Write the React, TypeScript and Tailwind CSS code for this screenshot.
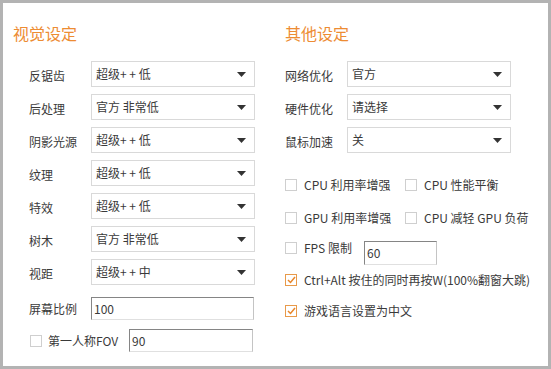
import React from 'react';

const font = { fontFamily: '"Noto Sans CJK SC", "Noto Sans", sans-serif' };

const Select: React.FC<{ value: string }> = ({ value }) => (
  <div className="w-[164px] h-[26px] border border-[#d9d9d9] bg-white flex items-center justify-between pl-[4px] pr-[8px] text-[12px] text-[#3a3a3a]">
    <span className="leading-none">{value}</span>
    <svg width="9" height="5" viewBox="0 0 9 5">
      <path d="M0 0h9L4.5 5z" fill="#333" />
    </svg>
  </div>
);

const Input: React.FC<{ value: string; w: string }> = ({ value, w }) => (
  <div
    className={`${w} h-[23px] border border-t-[#858585] border-l-[#858585] border-r-[#c4c4c4] border-b-[#e0e0e0] bg-white flex items-center pl-[2px] text-[12px] text-[#3a3a3a]`}
  >
    {value}
  </div>
);

const Check: React.FC<{ checked?: boolean }> = ({ checked }) =>
  checked ? (
    <div className="w-[12px] h-[12px] border border-[#e89a4a] bg-white flex items-center justify-center shrink-0">
      <svg width="9" height="8" viewBox="0 0 9 8">
        <path d="M1 4l2.5 2.5L8 1" fill="none" stroke="#e8862a" strokeWidth="1.5" />
      </svg>
    </div>
  ) : (
    <div className="w-[12px] h-[12px] border border-[#cfcfcf] bg-white shrink-0" />
  );

const Row: React.FC<{ label: string; value: string }> = ({ label, value }) => (
  <div className="flex items-center h-[26px]">
    <span className="w-[62px] text-[12px] text-[#3a3a3a] pt-[4px]">{label}</span>
    <Select value={value} />
  </div>
);

const CheckItem: React.FC<{ label: string; checked?: boolean; w?: string }> = ({ label, checked, w }) => (
  <div className={`flex items-center gap-[7px] h-[20px] ${w ?? ''}`}>
    <Check checked={checked} />
    <span className="text-[12px] text-[#3a3a3a] leading-none">{label}</span>
  </div>
);

const App: React.FC = () => {
  const visual = [
    ['反锯齿', '超级+ + 低'],
    ['后处理', '官方 非常低'],
    ['阴影光源', '超级+ + 低'],
    ['纹理', '超级+ + 低'],
    ['特效', '超级+ + 低'],
    ['树木', '官方 非常低'],
    ['视距', '超级+ + 中'],
  ];
  const other = [
    ['网络优化', '官方'],
    ['硬件优化', '请选择'],
    ['鼠标加速', '关'],
  ];

  return (
    <div style={font} className="w-[551px] h-[369px] border-[3px] border-[#b3b3b3] bg-white flex">
      {/* 视觉设定 */}
      <div className="w-[279px] pt-[20px]">
        <h2 className="pl-[10px] h-[20px] leading-[20px] text-[16px] text-[#ed8c33]">视觉设定</h2>
        <div className="pl-[26px] mt-[18px] flex flex-col gap-[7px]">
          {visual.map(([l, v]) => (
            <Row key={l} label={l} value={v} />
          ))}
        </div>
        <div className="pl-[26px] mt-[12px] flex items-center">
          <span className="w-[62px] text-[12px] text-[#3a3a3a]">屏幕比例</span>
          <Input value="100" w="w-[163px]" />
        </div>
        <div className="pl-[27px] mt-[9px] flex items-center">
          <div className="w-[99px] flex items-center gap-[6px]">
            <Check />
            <span className="text-[12px] text-[#3a3a3a]">第一人称FOV</span>
          </div>
          <Input value="90" w="w-[124px]" />
        </div>
      </div>

      {/* 其他设定 */}
      <div className="flex-1 pt-[20px] pl-[3px]">
        <h2 className="h-[20px] leading-[20px] text-[16px] text-[#ed8c33]">其他设定</h2>
        <div className="mt-[18px] flex flex-col gap-[7px]">
          {other.map(([l, v]) => (
            <Row key={l} label={l} value={v} />
          ))}
        </div>
        <div className="mt-[22px] flex">
          <CheckItem label="CPU 利用率增强" w="w-[120px]" />
          <CheckItem label="CPU 性能平衡" />
        </div>
        <div className="mt-[13px] flex">
          <CheckItem label="GPU 利用率增强" w="w-[120px]" />
          <CheckItem label="CPU 减轻 GPU 负荷" />
        </div>
        <div className="mt-[10px] flex items-start">
          <CheckItem label="FPS 限制" w="w-[79px]" />
          <div className="mt-[3px]">
            <Input value="60" w="w-[73px] h-[24px]" />
          </div>
        </div>
        <div className="mt-[5px]">
          <CheckItem label="Ctrl+Alt 按住的同时再按W(100%翻窗大跳)" checked />
        </div>
        <div className="mt-[11px]">
          <CheckItem label="游戏语言设置为中文" checked />
        </div>
      </div>
    </div>
  );
};

export default App;
